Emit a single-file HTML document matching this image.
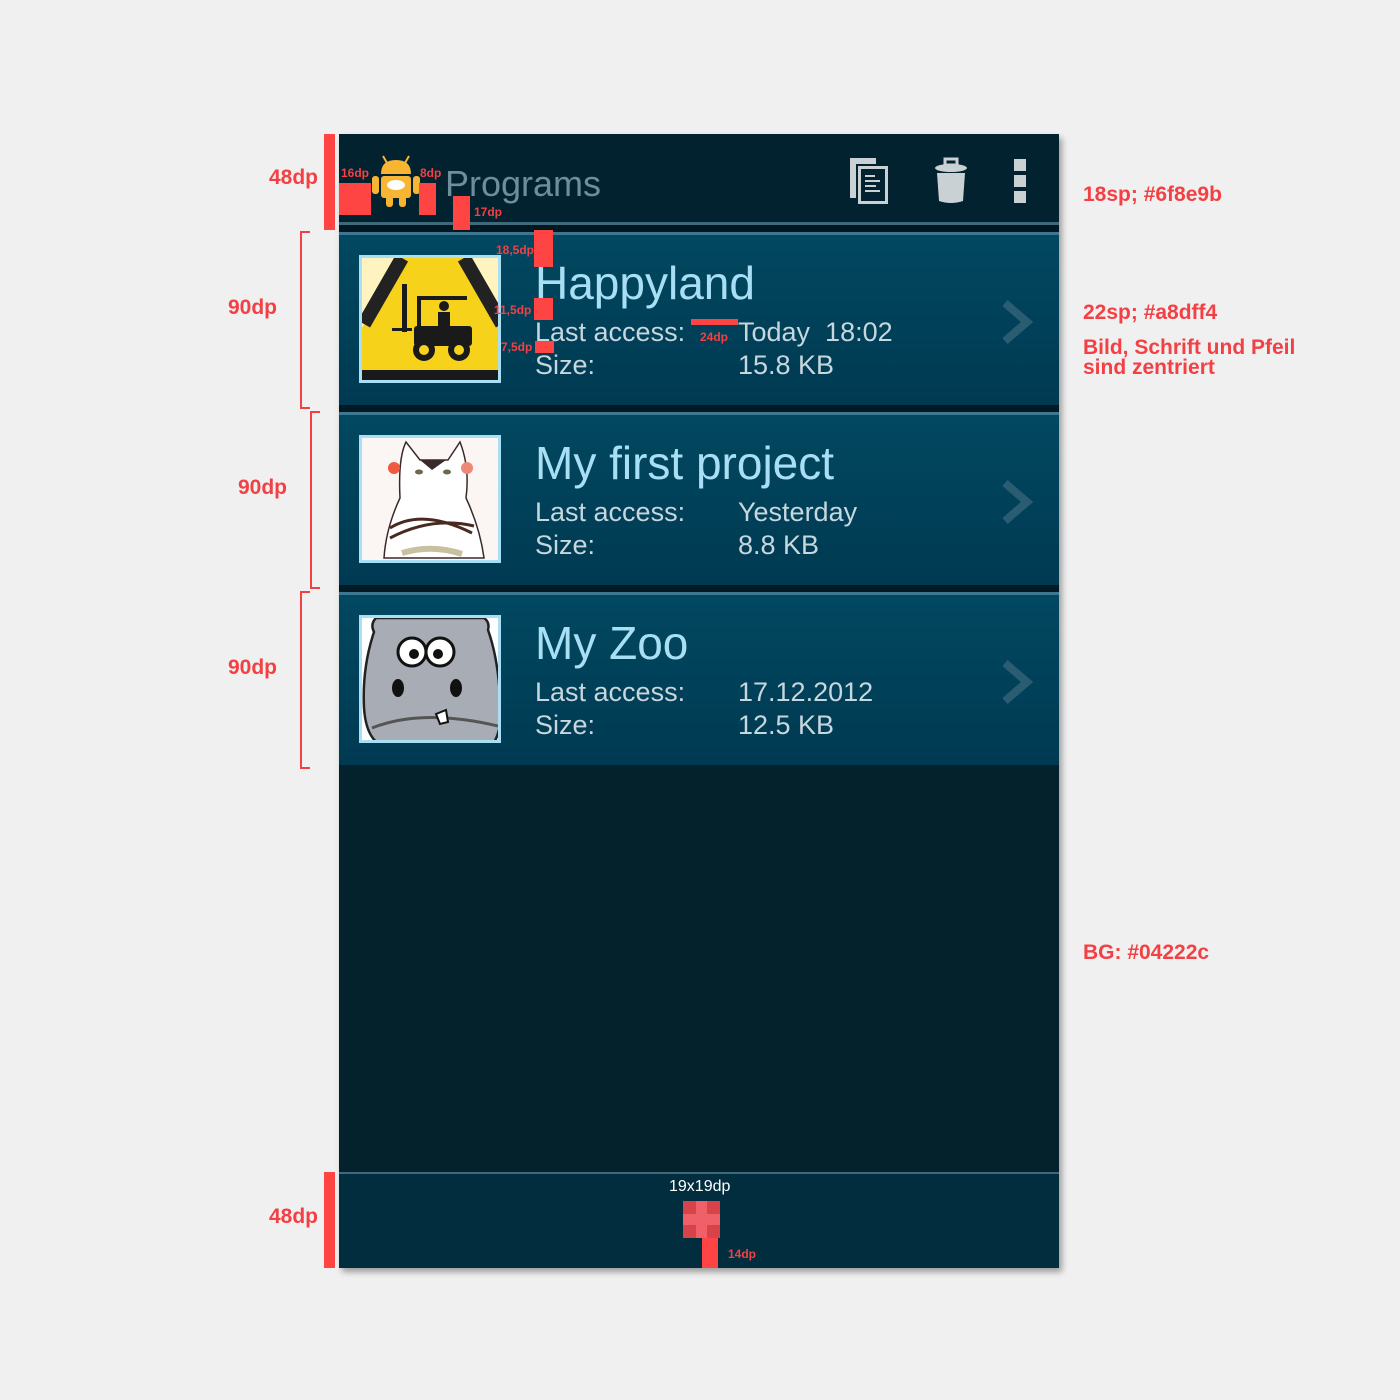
<!DOCTYPE html>
<html><head><meta charset="utf-8"><style>
*{margin:0;padding:0;box-sizing:border-box}
body{width:1400px;height:1400px;background:#f0f0f0;position:relative;overflow:hidden;font-family:"Liberation Sans",sans-serif}
.a{position:absolute}
.red{color:#f34044;font-weight:bold}
.bar{background:#f44;position:absolute}
.phone{left:339px;top:134px;width:720px;height:1134px;background:#04222c;box-shadow:3px 4px 6px rgba(0,0,0,.35)}
.hdr{left:339px;top:134px;width:720px;height:90px;background:#022230}
.row{position:absolute;left:339px;width:720px;height:180px;background:#011a24}
.row .in{position:absolute;left:0;top:0;width:720px;height:173px;border-top:3px solid #3e7890;background:linear-gradient(#014860,#003a52)}
.img{position:absolute;left:20px;top:20px;width:142px;height:128px;border:3px solid #a8dff4;overflow:hidden;background:#fff}
.t{position:absolute;left:196px;top:20px;color:#a8dff4;font-size:46px;line-height:56px;font-weight:500}
.l{position:absolute;left:196px;color:#c8d6dd;font-size:27px;line-height:32px;font-weight:500}
.v{position:absolute;left:399px;color:#c8d6dd;font-size:27px;line-height:32px;font-weight:500}
.chev{position:absolute;left:660px;top:64px}
</style></head><body>
<div class="a phone"></div>
<div class="a hdr"></div>
<div class="a" style="left:339px;top:222px;width:720px;height:3px;background:#3e6a7c"></div>
<div class="a" style="left:339px;top:225px;width:720px;height:7px;background:#011822"></div>
<svg class="a" style="left:371px;top:154px" width="50" height="54" viewBox="0 0 50 54">
<line x1="12" y1="2" x2="16" y2="9" stroke="#f7b533" stroke-width="2"/><line x1="38" y1="2" x2="34" y2="9" stroke="#f7b533" stroke-width="2"/>
<path d="M10 20 Q10 6 25 6 Q40 6 40 20Z" fill="#f7b533"/>
<rect x="10" y="22" width="30" height="22" rx="3" fill="#f7b533"/>
<rect x="1" y="22" width="7" height="18" rx="3" fill="#f7b533"/><rect x="42" y="22" width="7" height="18" rx="3" fill="#f7b533"/>
<rect x="15" y="42" width="7" height="11" rx="3" fill="#f7b533"/><rect x="28" y="42" width="7" height="11" rx="3" fill="#f7b533"/>
<ellipse cx="25" cy="31" rx="9" ry="5" fill="#fff"/></svg>
<div class="a" style="left:445px;top:162px;color:#6f8e9b;font-size:36px;line-height:44px;font-weight:500">Programs</div>
<svg class="a" style="left:848px;top:156px" width="44" height="50" viewBox="0 0 44 50">
<path d="M2 2H28V8H8V42H2Z" fill="#c9d1d5"/>
<rect x="10" y="10" width="30" height="38" fill="#c9d1d5"/><rect x="13" y="13" width="24" height="32" fill="#022230"/>
<g stroke="#c9d1d5" stroke-width="2"><line x1="17" y1="20" x2="27" y2="20"/><line x1="17" y1="25" x2="32" y2="25"/><line x1="17" y1="30" x2="28" y2="30"/><line x1="17" y1="35" x2="32" y2="35"/></g></svg>
<svg class="a" style="left:933px;top:157px" width="36" height="48" viewBox="0 0 36 48">
<path d="M12 2H24V8H12Z" fill="none" stroke="#c9d1d5" stroke-width="3"/>
<ellipse cx="18" cy="11" rx="16" ry="4" fill="#c9d1d5"/>
<path d="M4 16H32L30 44Q18 48 6 44Z" fill="#c9d1d5"/></svg>
<div class="a" style="left:1014px;top:159px;width:12px;height:12px;background:#c9d1d5"></div>
<div class="a" style="left:1014px;top:175px;width:12px;height:12px;background:#c9d1d5"></div>
<div class="a" style="left:1014px;top:191px;width:12px;height:12px;background:#c9d1d5"></div>

<div class="row" style="top:232px"><div class="in">
<div class="img"><svg width="142" height="128" viewBox="0 0 142 128"><rect width="142" height="128" fill="#f7d21a"/><path d="M0 0H40L0 70Z" fill="#fff4c0"/><path d="M102 0H142V70Z" fill="#fff4c0"/>
<path d="M40 0L2 66" stroke="#222" stroke-width="14"/><path d="M102 0L140 66" stroke="#222" stroke-width="14"/><rect y="112" width="142" height="16" fill="#1a1a1a"/>
<g fill="#1a1a1a"><rect x="40" y="26" width="5" height="48"/><rect x="30" y="70" width="20" height="3"/><rect x="55" y="38" width="50" height="4"/><rect x="55" y="38" width="4" height="40"/><rect x="52" y="68" width="58" height="20" rx="3"/><circle cx="62" cy="92" r="11"/><circle cx="97" cy="92" r="11"/><circle cx="82" cy="48" r="5"/><rect x="76" y="54" width="12" height="16"/></g>
<circle cx="62" cy="92" r="5" fill="#f7d21a"/><circle cx="97" cy="92" r="5" fill="#f7d21a"/></svg></div>
<div class="t">Happyland</div>
<div class="l" style="top:81px">Last access:</div><div class="v" style="top:81px">Today&nbsp; 18:02</div>
<div class="l" style="top:114px">Size:</div><div class="v" style="top:114px">15.8 KB</div>
<svg class="chev" width="34" height="46"><path d="M6 4L28 23L6 42" fill="none" stroke="#2a5c72" stroke-width="8"/></svg>
</div></div>

<div class="row" style="top:412px"><div class="in">
<div class="img"><svg width="142" height="128" viewBox="0 0 142 128"><rect width="142" height="128" fill="#fbf6f3"/><path d="M38 60Q36 20 44 4L58 22H86L98 4Q108 30 104 60Q118 90 122 120H22Q24 90 38 60Z" fill="#fff" stroke="#3a2a2a" stroke-width="1.5"/><path d="M58 22L70 32L84 22Z" fill="#3a2a2a"/><circle cx="32" cy="30" r="6" fill="#f05a40"/><circle cx="105" cy="30" r="6" fill="#f08878"/><ellipse cx="57" cy="34" rx="4" ry="2.5" fill="#6a6a4a"/><ellipse cx="85" cy="34" rx="4" ry="2.5" fill="#6a6a4a"/><path d="M28 90Q60 70 110 95M28 100Q70 78 112 88" fill="none" stroke="#4a2a20" stroke-width="3"/><path d="M40 115Q70 106 100 116" stroke="#c8c0a0" stroke-width="6" fill="none"/></svg></div>
<div class="t">My first project</div>
<div class="l" style="top:81px">Last access:</div><div class="v" style="top:81px">Yesterday</div>
<div class="l" style="top:114px">Size:</div><div class="v" style="top:114px">8.8 KB</div>
<svg class="chev" width="34" height="46"><path d="M6 4L28 23L6 42" fill="none" stroke="#2a5c72" stroke-width="8"/></svg>
</div></div>

<div class="row" style="top:592px;background:#04222c"><div class="in">
<div class="img"><svg width="142" height="128" viewBox="0 0 142 128"><rect width="142" height="128" fill="#fff"/><path d="M14 0Q8 6 12 14Q0 50 2 90Q4 120 20 128H130Q142 110 138 80Q136 40 126 12Q128 4 122 0Z" fill="#a7acb5" stroke="#222" stroke-width="2.5"/><path d="M10 110Q60 90 136 108" fill="none" stroke="#555" stroke-width="3"/><circle cx="50" cy="34" r="14" fill="#fff" stroke="#111" stroke-width="3"/><circle cx="78" cy="34" r="14" fill="#fff" stroke="#111" stroke-width="3"/><circle cx="52" cy="36" r="5" fill="#111"/><circle cx="76" cy="36" r="5" fill="#111"/><ellipse cx="36" cy="70" rx="6" ry="9" fill="#111"/><ellipse cx="94" cy="70" rx="6" ry="9" fill="#111"/><path d="M74 96L84 92L86 104L78 106Z" fill="#fff" stroke="#111" stroke-width="2"/></svg></div>
<div class="t">My Zoo</div>
<div class="l" style="top:81px">Last access:</div><div class="v" style="top:81px">17.12.2012</div>
<div class="l" style="top:114px">Size:</div><div class="v" style="top:114px">12.5 KB</div>
<svg class="chev" width="34" height="46"><path d="M6 4L28 23L6 42" fill="none" stroke="#2a5c72" stroke-width="8"/></svg>
</div></div>

<div class="a" style="left:339px;top:1172px;width:720px;height:96px;background:#022d3e;border-top:2px solid #3e6a7c"></div>
<div class="a" style="left:669px;top:1177px;color:#fff;font-size:16px;line-height:20px">19x19dp</div>
<div class="a" style="left:683px;top:1201px;width:37px;height:37px;background:#d8434a"></div>
<div class="a" style="left:683px;top:1214px;width:37px;height:11px;background:#f06068"></div>
<div class="a" style="left:696px;top:1201px;width:11px;height:37px;background:#f06068"></div>
<div class="bar" style="left:702px;top:1238px;width:16px;height:30px"></div>
<div class="a red" style="left:728px;top:1247px;font-size:12px">14dp</div>

<div class="bar" style="left:324px;top:134px;width:11px;height:96px"></div>
<div class="a red" style="left:269px;top:166px;font-size:21px">48dp</div>
<div class="bar" style="left:324px;top:1172px;width:11px;height:96px"></div>
<div class="a red" style="left:269px;top:1205px;font-size:21px">48dp</div>
<div class="a" style="left:300px;top:231px;width:10px;height:178px;border:2px solid #f34044;border-right:none"></div>
<div class="a red" style="left:228px;top:296px;font-size:21px">90dp</div>
<div class="a" style="left:310px;top:411px;width:10px;height:178px;border:2px solid #f34044;border-right:none"></div>
<div class="a red" style="left:238px;top:476px;font-size:21px">90dp</div>
<div class="a" style="left:300px;top:591px;width:10px;height:178px;border:2px solid #f34044;border-right:none"></div>
<div class="a red" style="left:228px;top:656px;font-size:21px">90dp</div>

<div class="bar" style="left:339px;top:183px;width:32px;height:32px"></div>
<div class="bar" style="left:419px;top:183px;width:17px;height:32px"></div>
<div class="bar" style="left:453px;top:196px;width:17px;height:34px"></div>
<div class="a red" style="left:341px;top:166px;font-size:12px">16dp</div>
<div class="a red" style="left:420px;top:166px;font-size:12px">8dp</div>
<div class="a red" style="left:474px;top:205px;font-size:12px">17dp</div>
<div class="bar" style="left:534px;top:230px;width:19px;height:37px"></div>
<div class="bar" style="left:534px;top:298px;width:19px;height:22px"></div>
<div class="bar" style="left:535px;top:341px;width:19px;height:12px"></div>
<div class="bar" style="left:691px;top:319px;width:47px;height:6px"></div>
<div class="a red" style="left:496px;top:243px;font-size:12px">18,5dp</div>
<div class="a red" style="left:494px;top:303px;font-size:12px">11,5dp</div>
<div class="a red" style="left:501px;top:340px;font-size:12px">7,5dp</div>
<div class="a red" style="left:700px;top:330px;font-size:12px">24dp</div>

<div class="a red" style="left:1083px;top:183px;font-size:21px">18sp; #6f8e9b</div>
<div class="a red" style="left:1083px;top:301px;font-size:21px">22sp; #a8dff4</div>
<div class="a red" style="left:1083px;top:338px;font-size:21px;line-height:20px">Bild, Schrift und Pfeil<br>sind zentriert</div>
<div class="a red" style="left:1083px;top:941px;font-size:21px">BG: #04222c</div>
</body></html>
